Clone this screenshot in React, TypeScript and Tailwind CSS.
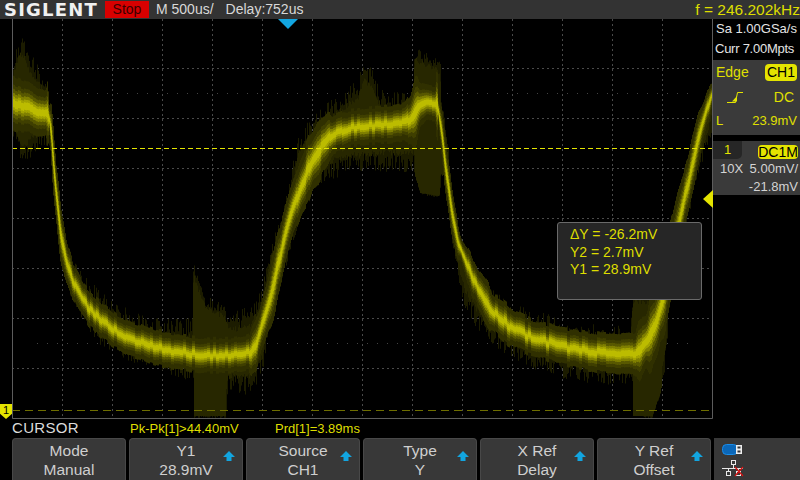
type Pt = [number, number]

const centerPts: Pt[] = [[12,103],[30,108],[48,115],[50,122],[53,162],[56,195],[60,232],[65,258],[72,280],[80,296],[90,310],[100,320],[115,331],[130,339],[150,346],[170,351],[190,354],[210,355],[235,355],[250,352],[255,345],[262,325],[270,298],[278,262],[285,235],[292,210],[300,188],[310,165],[320,148],[330,136],[345,129],[365,126],[385,125],[405,123],[412,118],[418,108],[425,104],[437,104],[441,130],[445,165],[447,180],[452,215],[458,245],[465,260],[473,280],[490,310],[510,327],[530,337],[560,346],[590,351],[620,355],[636,353],[648,340],[656,320],[662,300],[670,262],[680,215],[690,175],[700,130],[712,92]]
const topPts: Pt[] = [[12,60],[18,38],[22,34],[28,50],[35,60],[42,70],[48,85],[50,120],[55,165],[60,220],[70,255],[80,270],[100,290],[120,305],[150,315],[192,318],[193,262],[197,275],[205,295],[225,305],[235,310],[250,305],[262,285],[270,240],[283,210],[298,133],[320,106],[340,92],[358,78],[363,62],[370,65],[375,78],[385,95],[400,90],[413,95],[414,47],[425,52],[440,60],[441,88],[446,120],[450,170],[455,215],[465,250],[480,280],[500,295],[520,305],[560,318],[600,325],[630,325],[632,290],[662,290],[670,250],[680,205],[690,150],[700,110],[708,85],[712,85]]
const botPts: Pt[] = [[12,140],[22,167],[30,158],[40,152],[50,145],[54,172],[60,250],[70,300],[80,320],[100,345],[130,362],[170,375],[193,382],[194,418],[225,418],[228,395],[250,395],[262,375],[268,335],[275,300],[290,255],[300,215],[320,185],[345,175],[380,172],[413,172],[420,195],[438,198],[444,190],[450,230],[455,275],[465,310],[480,335],[500,352],[520,365],[560,378],[600,385],[632,385],[633,418],[652,418],[660,395],[665,370],[670,300],[680,250],[695,190],[705,160],[712,130]]
const bandPts: Pt[] = [[12,14],[47,11],[48.5,1.5],[56,1.5],[62,2.5],[100,7],[150,9],[250,9],[258,4],[290,4],[320,9],[410,10],[436,9],[438,1.5],[460,2.5],[500,8],[640,11],[660,5],[700,3],[712,2.5]]

function lerp(t: Pt[], x: number) {
  for (let i = 1; i < t.length; i++) {
    if (x <= t[i][0]) {
      const [a, b] = t[i - 1]
      const [c, d] = t[i]
      return b + ((d - b) * (x - a)) / (c - a)
    }
  }
  return t[t.length - 1][1]
}

let seed = 12345
const rnd = () => {
  seed = (seed * 1103515245 + 12345) & 0x7fffffff
  return seed / 0x7fffffff
}

const center = (x: number) => (lerp(centerPts, x - 1) + lerp(centerPts, x) + lerp(centerPts, x + 1)) / 3

function buildWave() {
  const layers: string[][] = [[], [], [], [], [], [], [], [], []]
  const fracs = [1.9, 1.3, 1, 0.72, 0.48, 0.28]
  let j = 0
  const col = (l: number, x: number, a: number, b: number) => {
    const y1 = Math.max(19, a)
    const y2 = Math.min(418, b)
    if (y2 > y1) layers[l].push(`M${x} ${y1.toFixed(1)}h1V${y2.toFixed(1)}h-1z`)
  }
  for (let x = 13; x < 712; x++) {
    const c = center(x)
    const s = (center(x + 2) - center(x - 2)) / 4
    const k = Math.sqrt(1 + s * s)
    const p = lerp(bandPts, x)
    const top = lerp(topPts, x)
    const bot = lerp(botPts, x)
    const burst = (x > 193 && x < 226) || (x > 414 && x < 440) || (x > 632 && x < 662)
    const amp = burst ? 12 : 20
    col(0, x, top + rnd() * amp, bot - rnd() * (burst ? 3 : amp))
    col(1, x, top + amp * 0.8 + rnd() * 6, bot - (burst ? 2 : amp * 0.8 + rnd() * 6))
    if (x % 3 === 0) j = (rnd() - 0.5) * Math.min(p, 4)
    fracs.forEach((f, i) => {
      const h = Math.max(0.7, p * f * k)
      col(i + 2, x, c - h + j, c + h + j)
    })
  }
  return layers.map(l => l.join(""))
}

const waveColors = ["#1c1c00", "#272700", "#303000", "#3f3f00", "#585800", "#7f7f00", "#a2a200", "#bcbc00"]
const wave = buildWave()

const gridX = Array.from({ length: 13 }, (_, i) => 62 + i * 50)
const gridY = Array.from({ length: 7 }, (_, i) => 68 + i * 50)
const dotsX = Array.from({ length: 66 }, (_, i) => 37 + i * 10)

function Scope() {
  return (
    <svg width="701" height="400" viewBox="12 19 701 400" className="block">
      {gridX.map(x => (
        <line key={x} x1={x + 0.5} x2={x + 0.5} y1="19" y2="418" stroke="#4a4a4a" strokeDasharray="2 3" />
      ))}
      {gridY.map(y => (
        <line key={y} y1={y + 0.5} y2={y + 0.5} x1="12" x2="712" stroke="#4a4a4a" strokeDasharray="2 3" />
      ))}
      {dotsX.map(x => (
        <g key={x} fill="#444">
          <rect x={x} y="93" width="1" height="1" />
          <rect x={x} y="343" width="1" height="1" />
        </g>
      ))}
      {wave.map((d, i) => (
        <path key={i} d={d} fill={waveColors[i]} />
      ))}
      <line x1="12" x2="712" y1="148.5" y2="148.5" stroke="#e4e400" strokeDasharray="5 3" />
      <line x1="12" x2="712" y1="410.5" y2="410.5" stroke="#6e6e00" strokeDasharray="8 5" />
      <path d="M12.5 19V418.5H712.5V19" fill="none" stroke="#5c5c5c" />
    </svg>
  )
}

function UpArrow() {
  return (
    <svg width="12" height="10" viewBox="0 0 12 10" className="absolute right-[7px] top-[12px]">
      <path d="M6 0L12 6H8.5V10H3.5V6H0z" fill="#12a5e0" />
    </svg>
  )
}

function SoftKey({ a, b, arrow }: { a: string; b: string; arrow?: boolean }) {
  return (
    <div className="relative w-[114px] h-[42px] bg-[#383838] border border-b-0 border-[#484848] rounded-t-[4px] flex flex-col items-center text-[15.5px] leading-[19px] text-[#cfcfcf] pt-[2px]">
      <span>{a}</span>
      <span>{b}</span>
      {arrow && <UpArrow />}
    </div>
  )
}

function StatusIcons() {
  return (
    <div className="w-[86px] h-[42px] bg-[#383838] pl-[8px] pt-[6px]">
      <svg width="40" height="34" viewBox="0 0 40 34" className="block">
        <rect x="0.5" y="0.5" width="15" height="10" rx="4" fill="#0b67b8" stroke="#1a8ce8" />
        <rect x="14" y="1" width="6" height="9" fill="#eee" />
        <rect x="15.5" y="2.5" width="3" height="2" fill="#333" />
        <rect x="15.5" y="6.5" width="3" height="2" fill="#333" />
        <g fill="none" stroke="#e8e8e8">
          <rect x="9.5" y="16.5" width="4" height="4" />
          <path d="M11.5 20.5V24.5M0 24.5H21M6.5 24.5V27.5M16.5 24.5V27.5" />
          <rect x="4.5" y="27.5" width="4" height="4" />
          <rect x="14.5" y="27.5" width="4" height="4" />
        </g>
        <path d="M13 23L21 32M21 23L13 32" stroke="#d81010" strokeWidth="1.2" />
      </svg>
    </div>
  )
}

function RightPanel() {
  return (
    <div className="w-[87px] h-[400px] text-[13px] leading-[20px]">
      <div className="h-[41px] pl-[3px] text-[#e4e4e4]">
        <div>Sa 1.00GSa/s</div>
        <div className="-ml-[1px] tracking-[-0.25px]">Curr 7.00Mpts</div>
      </div>
      <div className="h-[75px] bg-[#3a3a3a] text-[#e0e000] px-[3px] flex flex-col">
        <div className="flex justify-between items-center h-[24px]">
          <span className="text-[14px]">Edge</span>
          <span className="bg-[#e4e400] text-black rounded-[4px] h-[17px] w-[32px] text-center leading-[17px] text-[14px]">CH1</span>
        </div>
        <div className="flex justify-between items-center h-[26px] pl-[11px] pr-[3px]">
          <svg width="17" height="13" viewBox="0 0 17 13">
            <path d="M0 11.5H8.5L10.5 1.5H16" fill="none" stroke="#e4e400" />
            <path d="M5 10.5L10 5V10.5z" fill="#e4e400" />
          </svg>
          <span className="text-[14px]">DC</span>
        </div>
        <div className="flex justify-between items-center h-[21px]">
          <span>L</span>
          <span>23.9mV</span>
        </div>
      </div>
      <div className="mt-[6px] h-[54px] bg-[#3a3a3a] text-[#d4d4d4]">
        <div className="flex justify-between items-start h-[18px]">
          <span className="w-[29px] h-[18px] bg-[#262626] rounded-br-[5px] text-center text-[#e4e400] leading-[18px]">1</span>
          <span className="mt-[4px] mr-[2px] w-[40px] h-[14px] bg-[#e4e400] text-black rounded-[4px] text-center leading-[14px] text-[14px]">DC1M</span>
        </div>
        <div className="flex justify-between pl-[7px] pr-[2px] mt-[1px] leading-[18px]">
          <span>10X</span>
          <span>5.00mV/</span>
        </div>
        <div className="text-right pr-[2px] leading-[17px]">-21.8mV</div>
      </div>
    </div>
  )
}

export default function App() {
  return (
    <div className="relative w-[800px] h-[480px] bg-black overflow-hidden font-['Liberation_Sans',Arial,sans-serif]">
      <div className="h-[19px] bg-[#333333] flex items-center text-[14px] text-[#d8d8d8]">
        <span className="w-[105px] pl-[4px] font-['DejaVu_Sans',sans-serif] font-bold text-[18px] leading-[19px] tracking-[1.2px] text-[#f0f0f0]">SIGLENT</span>
        <span className="w-[44px] h-[17px] bg-[#d80000] text-[#3a0000] text-center leading-[17px]">Stop</span>
        <span className="ml-[7px]">M 500us/</span>
        <span className="ml-[12px]">Delay:752us</span>
        <span className="ml-auto text-[15.5px] text-[#dede00]">f = 246.202kHz</span>
      </div>

      <div className="flex h-[400px]">
        <div className="relative w-[713px] pl-[12px]">
          <Scope />
          <svg width="20" height="10" viewBox="0 0 20 10" className="absolute left-[278px] top-0">
            <path d="M0 0H20L10 10z" fill="#12a5e0" />
          </svg>
          <svg width="10" height="18" viewBox="0 0 10 18" className="absolute left-[703px] top-[171px]">
            <path d="M10 0V18L0 9z" fill="#e4e400" />
          </svg>
          <div className="absolute left-0 top-[385px] w-[12px] h-[15px] bg-[#e4e400] text-black text-[11px] leading-[13px] text-center [clip-path:polygon(0_0,100%_0,100%_65%,50%_100%,0_65%)]">1</div>
          <div className="absolute left-[557px] top-[203px] w-[145px] h-[78px] bg-[#262626] border border-[#6a6a6a] rounded-[3px] pl-[12px] pt-[3px] text-[14px] leading-[17.5px] text-[#dede00]">
            <div>ΔY = -26.2mV</div>
            <div>Y2 = 2.7mV</div>
            <div>Y1 = 28.9mV</div>
          </div>
        </div>
        <RightPanel />
      </div>

      <div className="h-[19px] flex items-center">
        <span className="w-[130px] pl-[12px] text-[15px] tracking-[0.3px] text-[#dcdcdc]">CURSOR</span>
        <span className="w-[145px] text-[13px] text-[#dede00]">Pk-Pk[1]&gt;44.40mV</span>
        <span className="text-[13px] text-[#dede00]">Prd[1]=3.89ms</span>
      </div>

      <div className="flex pl-[12px] gap-[3px]">
        <SoftKey a="Mode" b="Manual" />
        <SoftKey a="Y1" b="28.9mV" arrow />
        <SoftKey a="Source" b="CH1" arrow />
        <SoftKey a="Type" b="Y" arrow />
        <SoftKey a="X Ref" b="Delay" arrow />
        <SoftKey a="Y Ref" b="Offset" arrow />
        <StatusIcons />
      </div>
    </div>
  )
}
